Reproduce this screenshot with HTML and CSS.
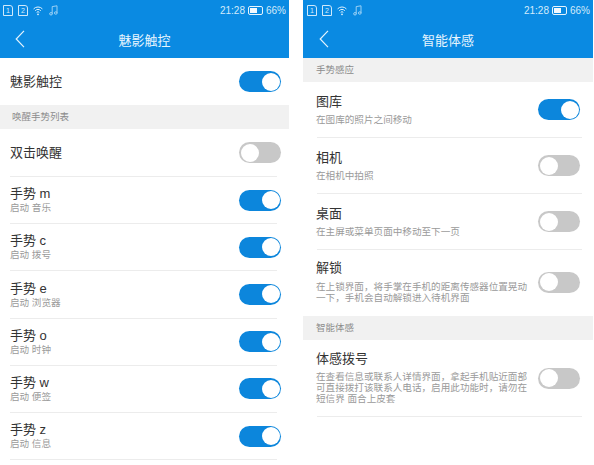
FILE: index.html
```html
<!DOCTYPE html>
<html lang="zh-CN">
<head>
    <meta charset="UTF-8">
    <meta name="viewport" content="width=device-width, initial-scale=1.0">
    <title>魅影触控 / 智能体感</title>
    <link rel="stylesheet" href="styles.css">
</head>
<body>
    <svg class="defs" width="0" height="0">
        <symbol id="wifi" viewBox="0 0 10 10">
            <path d="M.6 3.4a6 6 0 0 1 8.8 0M2.2 5.2a3.7 3.7 0 0 1 5.6 0M3.7 6.9a1.7 1.7 0 0 1 2.6 0" fill="none" stroke="#dff1fd" stroke-width="1"/>
            <circle cx="5" cy="8.8" r=".9" fill="#dff1fd"/>
        </symbol>
        <symbol id="music" viewBox="0 0 9 11">
            <path d="M3.2 8.6V1.6L8 .8v7" fill="none" stroke="#a9d8f7" stroke-width=".9"/>
            <ellipse cx="2" cy="8.8" rx="1.4" ry="1.2" fill="none" stroke="#a9d8f7" stroke-width=".9"/>
            <ellipse cx="6.8" cy="8" rx="1.4" ry="1.2" fill="none" stroke="#a9d8f7" stroke-width=".9"/>
        </symbol>
        <symbol id="back" viewBox="0 0 10 18">
            <path d="M9 .8 1.2 9 9 17.2" fill="none" stroke="#e4f3fd" stroke-width="1.2"/>
        </symbol>
    </svg>

    <section class="screen screen-left">
        <div class="header">
            <div class="statusbar">
                <span class="sim">1</span>
                <span class="sim">2</span>
                <svg class="st-icon"><use href="#wifi"/></svg>
                <svg class="st-icon st-music"><use href="#music"/></svg>
                <span class="spacer"></span>
                <span class="time">21:28</span>
                <span class="battery"><span class="battery-fill"></span></span>
                <span class="percent">66%</span>
            </div>
            <div class="titlebar">
                <svg class="back"><use href="#back"/></svg>
                <span class="title">魅影触控</span>
            </div>
        </div>

        <div class="row row-main">
            <div class="text"><div class="name">魅影触控</div></div>
            <span class="toggle on"></span>
        </div>
        <div class="group">唤醒手势列表</div>

        <div class="row row-main">
            <div class="text"><div class="name">双击唤醒</div></div>
            <span class="toggle"></span>
        </div>
        <div class="divider"></div>
        <div class="row">
            <div class="text"><div class="name">手势 m</div><div class="desc">启动 音乐</div></div>
            <span class="toggle on"></span>
        </div>
        <div class="divider"></div>
        <div class="row">
            <div class="text"><div class="name">手势 c</div><div class="desc">启动 拨号</div></div>
            <span class="toggle on"></span>
        </div>
        <div class="divider"></div>
        <div class="row">
            <div class="text"><div class="name">手势 e</div><div class="desc">启动 浏览器</div></div>
            <span class="toggle on"></span>
        </div>
        <div class="divider"></div>
        <div class="row">
            <div class="text"><div class="name">手势 o</div><div class="desc">启动 时钟</div></div>
            <span class="toggle on"></span>
        </div>
        <div class="divider"></div>
        <div class="row">
            <div class="text"><div class="name">手势 w</div><div class="desc">启动 便签</div></div>
            <span class="toggle on"></span>
        </div>
        <div class="divider"></div>
        <div class="row">
            <div class="text"><div class="name">手势 z</div><div class="desc">启动 信息</div></div>
            <span class="toggle on"></span>
        </div>
        <div class="divider"></div>
    </section>

    <section class="screen screen-right">
        <div class="header">
            <div class="statusbar">
                <span class="sim">1</span>
                <span class="sim">2</span>
                <svg class="st-icon"><use href="#wifi"/></svg>
                <svg class="st-icon st-music"><use href="#music"/></svg>
                <span class="spacer"></span>
                <span class="time">21:28</span>
                <span class="battery"><span class="battery-fill"></span></span>
                <span class="percent">66%</span>
            </div>
            <div class="titlebar">
                <svg class="back"><use href="#back"/></svg>
                <span class="title">智能体感</span>
            </div>
        </div>

        <div class="group">手势感应</div>
        <div class="row row-s">
            <div class="text"><div class="name">图库</div><div class="desc">在图库的照片之间移动</div></div>
            <span class="toggle on"></span>
        </div>
        <div class="divider"></div>
        <div class="row row-s">
            <div class="text"><div class="name">相机</div><div class="desc">在相机中拍照</div></div>
            <span class="toggle"></span>
        </div>
        <div class="divider"></div>
        <div class="row row-s">
            <div class="text"><div class="name">桌面</div><div class="desc">在主屏或菜单页面中移动至下一页</div></div>
            <span class="toggle"></span>
        </div>
        <div class="divider"></div>
        <div class="row row-m">
            <div class="text"><div class="name">解锁</div><div class="desc">在上锁界面，将手掌在手机的距离传感器位置晃动一下，手机会自动解锁进入待机界面</div></div>
            <span class="toggle"></span>
        </div>
        <div class="group">智能体感</div>
        <div class="row row-l">
            <div class="text"><div class="name">体感拨号</div><div class="desc">在查看信息或联系人详情界面，拿起手机贴近面部可直接拨打该联系人电话，启用此功能时，请勿在短信界 面合上皮套</div></div>
            <span class="toggle"></span>
        </div>
        <div class="divider"></div>
    </section>
</body>
</html>
```

FILE: styles.css
```css
html, body {
    margin: 0;
    padding: 0;
    background: #fff;
}
body {
    width: 594px;
    height: 465px;
    overflow: hidden;
    display: flex;
    font-family: "Liberation Sans", "Noto Sans CJK SC", sans-serif;
    color: #333;
}
.defs {
    display: block;
    width: 0;
    height: 0;
}
.screen-left {
    width: 289px;
    margin-right: 14px;
    --row-right: 8px;
    --div-right: 12px;
}
.screen-right {
    width: 290px;
    --row-right: 13px;
    --div-right: 11px;
}

/* 顶部蓝色区域 */
.header {
    background: #0a8ae2;
    height: 58px;
}
.statusbar {
    height: 20px;
    display: flex;
    align-items: center;
    padding: 0 3px;
    color: #d3ebfb;
    font-size: 10px;
}
.screen-right .statusbar {
    padding-left: 4px;
}
.sim {
    width: 10px;
    height: 11px;
    box-sizing: border-box;
    margin-right: 5px;
    border: 1px solid #cfe9fb;
    border-top-right-radius: 3px;
    font-size: 7px;
    line-height: 9px;
    text-align: center;
}
.st-icon {
    width: 10px;
    height: 11px;
    margin-right: 5px;
}
.st-music {
    width: 9px;
    margin-left: 1px;
}
.spacer {
    flex: 1;
}
.battery {
    width: 15px;
    height: 9px;
    margin: 0 3px;
    box-sizing: border-box;
    border: 1px solid #e6f4fd;
    border-radius: 2px;
    padding: 1px;
    display: flex;
}
.battery-fill {
    width: 66%;
    background: #f2f9fe;
}
.titlebar {
    height: 38px;
    display: flex;
    align-items: center;
    justify-content: center;
    position: relative;
}
.title {
    color: #e8f5fe;
    font-size: 13px;
}
.back {
    position: absolute;
    left: 15px;
    top: 10px;
    width: 10px;
    height: 18px;
}
.screen-right .back {
    left: 16px;
}

/* 分组标题 */
.group {
    height: 24px;
    line-height: 24px;
    background: #f1f1f1;
    color: #8c8c8c;
    font-size: 9.5px;
    padding-left: 12px;
}
.screen-right .group {
    padding-left: 13px;
}

/* 列表行 */
.row {
    height: 46.2px;
    box-sizing: border-box;
    display: flex;
    align-items: center;
    padding: 0 var(--row-right) 0 10px;
}
.row-main {
    height: 47px;
}
.row-s {
    height: 55px;
    padding-left: 13px;
}
.row-m {
    height: 66px;
    padding-left: 13px;
    padding-bottom: 2px;
}
.row-l {
    height: 76px;
    padding-left: 13px;
}
.text {
    flex: 1;
    min-width: 0;
}
.name {
    font-size: 13px;
    line-height: 16px;
    color: #333;
}
.desc {
    font-size: 9.6px;
    line-height: 10.7px;
    color: #9a9a9a;
    margin-top: 1px;
}
.row-s .desc, .row-l .desc {
    margin-top: 5px;
    width: 215px;
}
.row-m .desc {
    margin-top: 6px;
    width: 215px;
}
.divider {
    height: 1px;
    background: #ececec;
    margin: 0 var(--div-right) 0 10px;
}
.screen-right .divider {
    margin-left: 14px;
}

/* 开关 */
.toggle {
    flex: none;
    width: 42px;
    height: 21px;
    box-sizing: border-box;
    border-radius: 11px;
    background: #c8c8c8;
    padding: 1.5px;
    display: flex;
}
.toggle::before {
    content: "";
    width: 18px;
    height: 18px;
    border-radius: 50%;
    background: #fff;
}
.toggle.on {
    background: #0c86dc;
    justify-content: flex-end;
}
```
